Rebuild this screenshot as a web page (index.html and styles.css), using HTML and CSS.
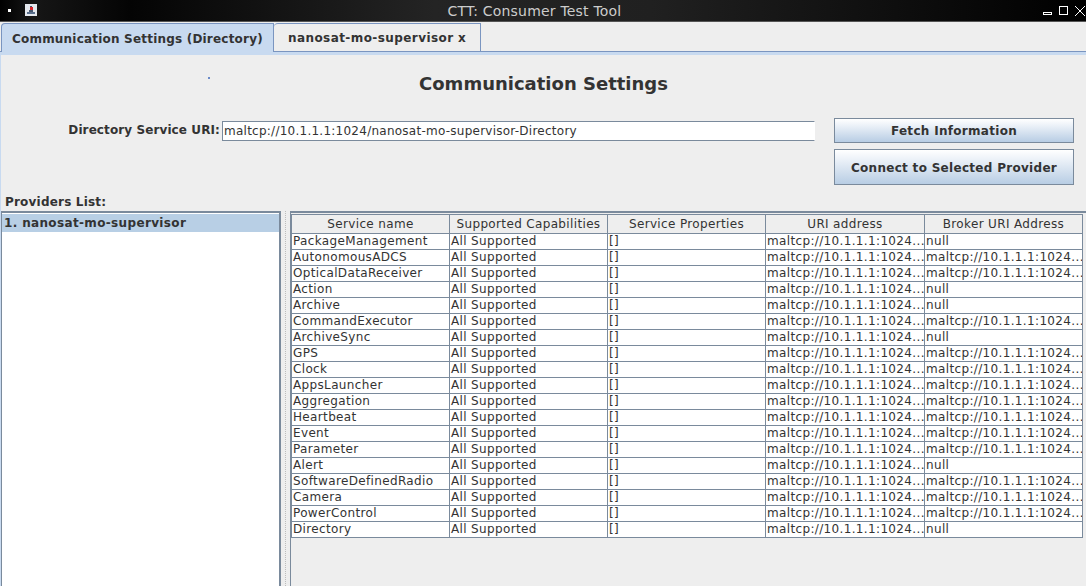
FILE: index.html
```html
<!DOCTYPE html>
<html lang="en">
<head>
    <meta charset="utf-8">
    <title>CTT: Consumer Test Tool</title>
    <link rel="stylesheet" href="styles.css">
</head>
<body>
    <div class="window">
        <header class="titlebar">
            <span class="menu-dot"></span>
            <svg class="app-icon" width="12" height="12" viewBox="0 0 12 12" aria-hidden="true">
                <rect width="12" height="12" fill="#e4e8ee"/>
                <path d="M2 8h8v2H2z" fill="#5a6f8c"/>
                <path d="M4 6h4v2H4zM5 2h2v3H5z" fill="#46566e"/>
                <rect x="5" y="3" width="3" height="3" fill="#d8252a"/>
            </svg>
            <span class="window-title">CTT: Consumer Test Tool</span>
            <div class="window-controls">
                <span class="ctl-min"></span>
                <span class="ctl-max"></span>
                <svg class="ctl-close" width="10" height="10" viewBox="0 0 10 10" aria-hidden="true">
                    <path d="M0 0l10 10M10 0L0 10" stroke="#fff" stroke-width="1" fill="none"/>
                </svg>
            </div>
        </header>

        <nav class="tabs">
            <div class="tab tab-active">Communication Settings (Directory)</div>
            <div class="tab">nanosat-mo-supervisor x</div>
        </nav>

        <main class="panel">
            <span class="stray-dot"></span>
            <h1 class="panel-title">Communication Settings</h1>
            <div class="uri-form">
                <label class="uri-label" for="uri">Directory Service URI:</label>
                <input class="uri-input" id="uri" type="text" value="maltcp://10.1.1.1:1024/nanosat-mo-supervisor-Directory">
                <div class="form-buttons">
                    <button class="btn btn-fetch">Fetch Information</button>
                    <button class="btn btn-connect">Connect to Selected Provider</button>
                </div>
            </div>
            <div class="providers-label">Providers List:</div>
            <div class="split">
                <ul class="provider-list">
                    <li class="selected">1. nanosat-mo-supervisor</li>
                </ul>
                <div class="divider"></div>
                <div class="table-pane">
                    <table class="services">
                        <thead>
                            <tr><th>Service name</th><th>Supported Capabilities</th><th>Service Properties</th><th>URI address</th><th>Broker URI Address</th></tr>
                        </thead>
                        <tbody>
                            <tr><td>PackageManagement</td><td>All Supported</td><td>[]</td><td>maltcp://10.1.1.1:1024...</td><td>null</td></tr>
                            <tr><td>AutonomousADCS</td><td>All Supported</td><td>[]</td><td>maltcp://10.1.1.1:1024...</td><td>maltcp://10.1.1.1:1024...</td></tr>
                            <tr><td>OpticalDataReceiver</td><td>All Supported</td><td>[]</td><td>maltcp://10.1.1.1:1024...</td><td>maltcp://10.1.1.1:1024...</td></tr>
                            <tr><td>Action</td><td>All Supported</td><td>[]</td><td>maltcp://10.1.1.1:1024...</td><td>null</td></tr>
                            <tr><td>Archive</td><td>All Supported</td><td>[]</td><td>maltcp://10.1.1.1:1024...</td><td>null</td></tr>
                            <tr><td>CommandExecutor</td><td>All Supported</td><td>[]</td><td>maltcp://10.1.1.1:1024...</td><td>maltcp://10.1.1.1:1024...</td></tr>
                            <tr><td>ArchiveSync</td><td>All Supported</td><td>[]</td><td>maltcp://10.1.1.1:1024...</td><td>null</td></tr>
                            <tr><td>GPS</td><td>All Supported</td><td>[]</td><td>maltcp://10.1.1.1:1024...</td><td>maltcp://10.1.1.1:1024...</td></tr>
                            <tr><td>Clock</td><td>All Supported</td><td>[]</td><td>maltcp://10.1.1.1:1024...</td><td>maltcp://10.1.1.1:1024...</td></tr>
                            <tr><td>AppsLauncher</td><td>All Supported</td><td>[]</td><td>maltcp://10.1.1.1:1024...</td><td>maltcp://10.1.1.1:1024...</td></tr>
                            <tr><td>Aggregation</td><td>All Supported</td><td>[]</td><td>maltcp://10.1.1.1:1024...</td><td>maltcp://10.1.1.1:1024...</td></tr>
                            <tr><td>Heartbeat</td><td>All Supported</td><td>[]</td><td>maltcp://10.1.1.1:1024...</td><td>maltcp://10.1.1.1:1024...</td></tr>
                            <tr><td>Event</td><td>All Supported</td><td>[]</td><td>maltcp://10.1.1.1:1024...</td><td>maltcp://10.1.1.1:1024...</td></tr>
                            <tr><td>Parameter</td><td>All Supported</td><td>[]</td><td>maltcp://10.1.1.1:1024...</td><td>maltcp://10.1.1.1:1024...</td></tr>
                            <tr><td>Alert</td><td>All Supported</td><td>[]</td><td>maltcp://10.1.1.1:1024...</td><td>null</td></tr>
                            <tr><td>SoftwareDefinedRadio</td><td>All Supported</td><td>[]</td><td>maltcp://10.1.1.1:1024...</td><td>maltcp://10.1.1.1:1024...</td></tr>
                            <tr><td>Camera</td><td>All Supported</td><td>[]</td><td>maltcp://10.1.1.1:1024...</td><td>maltcp://10.1.1.1:1024...</td></tr>
                            <tr><td>PowerControl</td><td>All Supported</td><td>[]</td><td>maltcp://10.1.1.1:1024...</td><td>maltcp://10.1.1.1:1024...</td></tr>
                            <tr><td>Directory</td><td>All Supported</td><td>[]</td><td>maltcp://10.1.1.1:1024...</td><td>null</td></tr>
                        </tbody>
                    </table>
                </div>
            </div>
        </main>
    </div>
</body>
</html>
```

FILE: styles.css
```css
html, body {
    margin: 0;
    padding: 0;
    height: 100%;
    overflow: hidden;
    background: #eeeeee;
    color: #333333;
    font-family: "DejaVu Sans", sans-serif;
    font-size: 12px;
}
.window {
    display: flex;
    flex-direction: column;
    width: 1086px;
    height: 586px;
}
.titlebar {
    position: relative;
    flex: none;
    height: 21px;
    display: flex;
    align-items: center;
    background: linear-gradient(90deg, #000000, #161616 3%, #040404 12%, #242424 40%, #202020 60%, #0c0c0c 85%, #000000);
    border-bottom: 1px solid #555555;
    color: #cccccc;
    font-size: 14px;
    letter-spacing: 0.2px;
}
.menu-dot {
    width: 3px;
    height: 3px;
    margin: 0 14px 0 8px;
    background: #ffffff;
}
.app-icon {
    margin-bottom: 1px;
}
.window-title {
    position: absolute;
    left: 0;
    right: 17px;
    text-align: center;
}
.window-controls {
    position: absolute;
    top: 6px;
    right: 1px;
    display: flex;
    align-items: flex-start;
    gap: 7px;
}
.ctl-min {
    width: 7px;
    height: 1px;
    margin-top: 6px;
    border: 1px solid #ffffff;
}
.ctl-max {
    width: 7px;
    height: 7px;
    border: 1px solid #ffffff;
}
.tabs {
    flex: none;
    display: flex;
    align-items: flex-end;
    height: 30px;
    padding-left: 1px;
    box-sizing: border-box;
    border-bottom: 1px solid #7a95c0;
}
.tab {
    box-sizing: border-box;
    height: 28px;
    padding: 7px 13px 0 14px;
    background: #eeeeee;
    border: 1px solid #7a95c0;
    border-bottom: none;
    border-top-left-radius: 4px;
    font-size: 12px;
    font-weight: bold;
    letter-spacing: 0.35px;
}
.tab-active {
    position: relative;
    width: 273px;
    height: 31px;
    margin-bottom: -3px;
    padding: 8px 0 0 10px;
    background: #c8daf0;
    letter-spacing: 0.2px;
}
.tab + .tab {
    width: 207px;
    border-left: none;
    letter-spacing: 0.42px;
}
.panel {
    position: relative;
    flex: 1;
    min-height: 0;
    display: flex;
    flex-direction: column;
    box-sizing: border-box;
    border-top: 3px solid #c8daf0;
    border-left: 1px solid #c8daf0;
}
.stray-dot {
    position: absolute;
    left: 207px;
    top: 22px;
    width: 2px;
    height: 2px;
    background: #6a8ac8;
}
.panel-title {
    margin: 16px 0 0;
    height: 25px;
    line-height: 25px;
    text-align: center;
    font-size: 18px;
    font-weight: bold;
    color: #333333;
}
.uri-form {
    display: grid;
    grid-template-columns: 219px 593px 240px;
    column-gap: 2px;
    height: 76px;
    margin-top: 22px;
}
.uri-label {
    padding-top: 5px;
    text-align: right;
    font-size: 12px;
    font-weight: bold;
    letter-spacing: 0.1px;
}
.uri-input {
    box-sizing: border-box;
    width: 593px;
    height: 20px;
    margin-top: 3px;
    padding: 0 1px;
    border: 1px solid #7a8a9c;
    border-right-color: #ffffff;
    border-bottom-color: #7a8a9c;
    background: #ffffff;
    color: #333333;
    font-family: "DejaVu Sans", sans-serif;
    font-size: 12px;
    letter-spacing: 0.25px;
}
.form-buttons {
    display: flex;
    flex-direction: column;
    gap: 6px;
    margin-left: 17px;
}
.btn {
    box-sizing: border-box;
    width: 240px;
    border: 1px solid #7a8a9c;
    background: linear-gradient(#ffffff, #eef3f9 25%, #b8cde4);
    color: #333333;
    font-family: "DejaVu Sans", sans-serif;
    font-size: 12px;
    font-weight: bold;
    letter-spacing: 0.3px;
    padding: 0;
}
.btn-fetch {
    height: 25px;
}
.btn-connect {
    height: 36px;
    padding-top: 2px;
}
.providers-label {
    height: 16px;
    padding-left: 4px;
    font-size: 12px;
    font-weight: bold;
    letter-spacing: 0.2px;
    line-height: 16px;
}
.split {
    flex: 1;
    min-height: 0;
    display: flex;
    margin-top: 1px;
}
.provider-list {
    box-sizing: border-box;
    width: 280px;
    margin: 0;
    padding: 1px 0 0;
    list-style: none;
    background: #ffffff;
    border: 2px solid #7a8a9c;
    border-width: 2px 2px 0 1px;
    font-size: 12px;
    font-weight: bold;
    letter-spacing: 0.35px;
}
.provider-list .selected {
    height: 18px;
    line-height: 18px;
    padding-left: 2px;
    background: #b8cfe5;
}
.divider {
    flex: none;
    box-sizing: border-box;
    width: 9px;
    padding: 0 3px;
    background-image: conic-gradient(#bcbcbc 25%, transparent 0);
    background-size: 2px 2px;
    background-clip: content-box;
    background-origin: content-box;
}
.table-pane {
    flex: 1;
    min-width: 0;
    box-sizing: border-box;
    padding: 1px 0 0;
    border: 2px solid #7a8a9c;
    border-width: 2px 0 0 1px;
}
.services {
    table-layout: fixed;
    border-collapse: collapse;
    width: 791px;
    background: #ffffff;
    color: #333333;
    font-size: 12px;
    letter-spacing: 0.35px;
}
.services th, .services td {
    box-sizing: border-box;
    overflow: hidden;
    white-space: nowrap;
    border: 1px solid #7a8a9c;
    padding: 0 1px;
    font-weight: normal;
}
.services th {
    width: 158px;
    height: 19px;
    background: #eeeeee;
    text-align: center;
}
.services th:nth-child(4) {
    width: 159px;
}
.services td {
    height: 16px;
    line-height: 15px;
}
```
